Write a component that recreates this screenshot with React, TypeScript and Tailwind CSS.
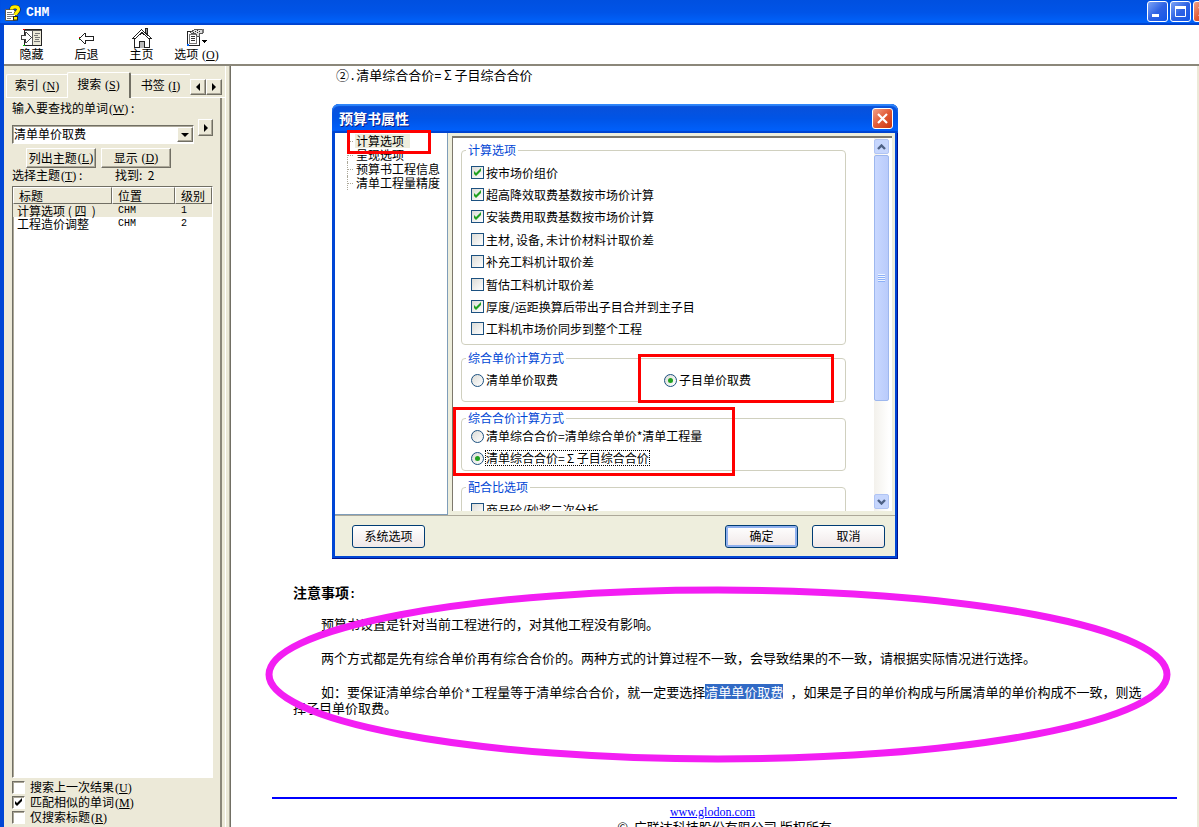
import React from "react";

const SANS = "font-['Noto_Sans_CJK_SC',sans-serif]";

function Key({ k }: { k: string }) {
  return (
    <span className="pl-px font-['Liberation_Serif',serif]">
      (<u className="underline-offset-1">{k}</u>)
    </span>
  );
}

function Half({ children }: { children: string }) {
  return <span className="font-['Liberation_Mono',monospace] text-[12px] leading-none whitespace-pre">{children}</span>;
}

function Sigma() {
  return <span className="inline-block w-[1em] text-center indent-0 leading-none">Σ</span>;
}

function HelpIcon() {
  return (
    <svg width="16" height="16" viewBox="0 0 16 16" aria-hidden="true">
      <path d="M.5 4.500h8l2 2v9H.5z" fill="#fff" stroke="#555" />
      <path d="M2 7.500h5M2 9.500h6M2 11.500h6M2 13.500h4" stroke="#777" />
      <path d="M6.500 4.500C6.500 1 13.500 1 13.500 4.500C13.500 7 10.500 7 10.500 10" fill="none" stroke="#222" strokeWidth="4.400" />
      <path d="M6.500 4.500C6.500 1 13.500 1 13.500 4.500C13.500 7 10.500 7 10.500 10" fill="none" stroke="#ffee00" strokeWidth="3.200" />
      <rect x="8.500" y="11.500" width="4" height="3.500" fill="#ffee00" stroke="#222" />
    </svg>
  );
}

function HideIcon() {
  return (
    <svg width="22" height="20" viewBox="0 0 22 20" shapeRendering="crispEdges" aria-hidden="true">
      <path d="M3.500 1.500h17v16h-17z" fill="#ece9d8" stroke="#222" />
      <path d="M4 3h7v14H4z" fill="#fff" />
      <path d="M11.500 2v15M4 2.500h16" stroke="#555" />
      <path d="M14 5.500h5M13 7.500h4M14 9.500h5M14 11.500h4M13 13.500h6" stroke="#777" />
      <path d="M0.500 7.500h4v-3h1l5 5-5 5h-1v-3h-4z" fill="#fff" stroke="#444" />
      <path d="M2 1h2v1H2z" fill="#e00" />
      <path d="M2 17h2v1H2z" fill="#0c0" />
    </svg>
  );
}

function BackIcon() {
  return (
    <svg width="22" height="20" viewBox="0 0 22 20" shapeRendering="crispEdges" aria-hidden="true">
      <path d="M3.500 10.500l5-5h1v3h8v4h-8v3h-1z" fill="#fff" stroke="#222" />
      <path d="M3 9h1v1H3z" fill="#e00" />
      <path d="M3 11h1v1H3z" fill="#0c0" />
    </svg>
  );
}

function HomeIcon() {
  return (
    <svg width="22" height="20" viewBox="0 0 22 20" shapeRendering="crispEdges" aria-hidden="true">
      <path d="M3.500 10v9.500h15V10L11 3z" fill="#fff" stroke="#222" />
      <path d="M14.500 7V.5h2V9" fill="#999" stroke="#222" />
      <path d="M1.500 10.500l9-9 10 9h-3l-6.500-6L4.500 10.500z" fill="#fff" stroke="#222" />
      <path d="M8.500 19.500v-6h5v6" fill="#bbb" stroke="#222" />
    </svg>
  );
}

function OptionsIcon() {
  return (
    <svg width="22" height="20" viewBox="0 0 22 20" shapeRendering="crispEdges" aria-hidden="true">
      <path d="M1.500 3.500h12v14h-12z" fill="#fff" stroke="#222" />
      <path d="M3.500 6.500h7v9h-7z" fill="#fff" stroke="#777" />
      <path d="M5 8.500h4M5 10.500h4M5 12.500h4" stroke="#333" />
      <path d="M4.500 4.500l4-3h8v4h-3v3h-2l-2-3h-4z" fill="#ddd" stroke="#555" />
      <path d="M7 4.500h1M9 3.500h1M11 4.500h1M13 3.500h1M11 2.500h1" stroke="#333" />
      <path d="M16 1h2v4h-2z" fill="#777" />
      <path d="M16 12h5v1h-5zM17 13h3v1h-3zM18 14h1v1h-1z" fill="#000" />
      <path d="M1 16h2v2H1z" fill="#06f" />
    </svg>
  );
}

function Triangle({ dir }: { dir: "left" | "right" | "down" }) {
  const d = dir === "left" ? "M6 0v8L2 4z" : dir === "right" ? "M2 0v8l4-4z" : "M0 2h8L4 6z";
  return (
    <svg width="8" height="8" viewBox="0 0 8 8" aria-hidden="true">
      <path d={d} fill="#000" />
    </svg>
  );
}

const raised =
  "flex items-center justify-center bg-[#ece9d8] border border-t-white border-l-white border-r-[#716f64] border-b-[#716f64] shadow-[inset_-1px_-1px_0_#aca899]";

function ToolButton({ icon, children }: { icon: React.ReactNode; children: React.ReactNode }) {
  return (
    <button className="flex w-[55px] flex-col items-center whitespace-nowrap pt-[3px] text-[12px] leading-[12px]">
      {icon}
      <span>{children}</span>
    </button>
  );
}

function CaptionButton({ label, close, children }: { label: string; close?: boolean; children: React.ReactNode }) {
  return (
    <button
      aria-label={label}
      className={
        "grid size-[21px] shrink-0 place-items-center rounded-[3px] border border-white " +
        (close
          ? "bg-linear-to-br from-[#f0a088] via-[#e25a35] to-[#c8330c]"
          : "bg-linear-to-br from-[#7da2f5] via-[#2f62e4] to-[#0d55e8]")
      }
    >
      {children}
    </button>
  );
}

function Cross() {
  return (
    <svg width="13" height="13" viewBox="0 0 13 13" aria-hidden="true">
      <path d="M2 2l9 9M11 2l-9 9" stroke="#fff" strokeWidth="2.200" />
    </svg>
  );
}

function ClassicCheck({ label, k, checked }: { label: string; k: string; checked?: boolean }) {
  return (
    <label className="flex h-[15px] items-center gap-[5px]">
      <span className="relative grid size-[13px]">
        <input
          type="checkbox"
          defaultChecked={checked}
          className="peer size-[13px] appearance-none border border-t-[#716f64] border-l-[#716f64] border-r-white border-b-white bg-white shadow-[inset_1px_1px_0_#aca899]"
        />
        <svg className="pointer-events-none absolute inset-0 hidden peer-checked:block" width="13" height="13" viewBox="0 0 13 13" aria-hidden="true">
          <path d="M3 5v3l2 2 5-5V2L5 7z" fill="#000" />
        </svg>
      </span>
      <span>
        {label}
        <Key k={k} />
      </span>
    </label>
  );
}

function XpCheck({ label, checked }: { label: string; checked?: boolean }) {
  return (
    <label className="flex h-[22px] items-center gap-[2px] whitespace-nowrap">
      <span className="relative grid size-[13px]">
        <input
          type="checkbox"
          defaultChecked={checked}
          className="peer size-[13px] appearance-none border border-[#1c5180] bg-linear-to-br from-[#dcdcd7] to-white"
        />
        <svg className="pointer-events-none absolute inset-0 hidden peer-checked:block" width="13" height="13" viewBox="0 0 13 13" aria-hidden="true">
          <path d="M3 5v3l2 2 5-5V2L5 7z" fill="#21a121" />
        </svg>
      </span>
      <span>{label}</span>
    </label>
  );
}

function XpRadio({ name, checked, focus, children }: { name: string; checked?: boolean; focus?: boolean; children: React.ReactNode }) {
  return (
    <label className="flex h-[22px] items-center gap-px whitespace-nowrap">
      <span className="relative grid size-[13px]">
        <input
          type="radio"
          name={name}
          defaultChecked={checked}
          className="peer size-[13px] appearance-none rounded-full border border-[#1c5180] bg-linear-to-br from-[#dcdcd7] to-white"
        />
        <span className="pointer-events-none absolute inset-1 hidden rounded-full bg-[#21a121] peer-checked:block" />
      </span>
      <span className={"border border-dotted leading-[14px] " + (focus ? "border-black" : "border-transparent")}>{children}</span>
    </label>
  );
}

function Group({ title, className, children }: { title: string; className: string; children: React.ReactNode }) {
  return (
    <fieldset className={"rounded-[4px] border border-[#d0d0bf] px-[9px] " + className}>
      <legend className="-ml-[5px] px-[2px] leading-[14px] text-[#0046d5]">{title}</legend>
      {children}
    </fieldset>
  );
}

function DialogButton({ children, primary }: { children: string; primary?: boolean }) {
  return (
    <button
      className={
        "h-[23px] w-[73px] rounded-[3px] border border-[#003c74] bg-linear-to-b from-white to-[#f0e8e8] pb-px leading-[14px] " +
        (primary ? "shadow-[inset_0_0_0_2px_#8fb0ee]" : "")
      }
    >
      {children}
    </button>
  );
}

const CHECKS: [string, boolean][] = [
  ["按市场价组价", true],
  ["超高降效取费基数按市场价计算", true],
  ["安装费用取费基数按市场价计算", true],
  ["主材, 设备, 未计价材料计取价差", false],
  ["补充工料机计取价差", false],
  ["暂估工料机计取价差", false],
  ["厚度/运距换算后带出子目合并到主子目", true],
  ["工料机市场价同步到整个工程", false],
];

const TREE = ["计算选项", "呈现选项", "预算书工程信息", "清单工程量精度"];

function Chevron({ up }: { up?: boolean }) {
  return (
    <svg width="9" height="6" viewBox="0 0 9 6" aria-hidden="true">
      <path d={up ? "M1 5l3.500-3.500L8 5" : "M1 1l3.500 3.500L8 1"} fill="none" stroke="#4d6185" strokeWidth="2.400" />
    </svg>
  );
}

function PropertiesDialog() {
  return (
    <section className="relative mt-[21px] ml-[100px] flex h-[455px] w-[566px] flex-col rounded-t-[7px] bg-[#0046d5] text-[12px] shadow-[inset_-1px_-1px_0_#00138c]">
      <header className="flex h-[29px] shrink-0 items-center justify-between rounded-t-[7px] bg-linear-to-b from-[#0a50d8] via-[#0054e6] to-[#0062ff] pr-[5px] pl-[7px] shadow-[inset_0_2px_1px_#2f86fa,inset_0_-2px_1px_#0043cf]">
        <h2 className="text-[14px] font-bold text-white [text-shadow:1px_1px_0_#0a1883]">预算书属性</h2>
        <CaptionButton label="关闭" close>
          <Cross />
        </CaptionButton>
      </header>
      <div className="mx-[3px] mb-[3px] flex min-h-0 flex-1 flex-col bg-[#eeeedd]">
        <div className="flex h-[383px] shrink-0 border-b border-[#aca899]">
          <ul className="w-[113px] border-r border-b border-[#7f9db9] bg-white pt-px pl-[12px] leading-[14px]">
            {TREE.map((t, i) => (
              <li key={t} className="flex items-center gap-[2px] whitespace-nowrap">
                <span className="h-[14px] w-[6px] shrink-0 border-l border-dotted border-[#aca899] pt-[7px]">
                  <span className="block border-t border-dotted border-[#aca899]" />
                </span>
                <span className={i === 0 ? "bg-[#eeeedd] pr-[6px] pl-px" : "pl-px"}>{t}</span>
              </li>
            ))}
          </ul>
          <div className="mt-[3px] mr-[3px] mb-[4px] ml-[4px] flex min-w-0 flex-1 overflow-hidden border-t-2 border-l border-[#7d786c] bg-white">
            <form className="flex flex-1 flex-col pt-[5px] pr-[28px] pl-[8px]">
              <Group title="计算选项" className="pt-[4px] pb-[4px]">
                <div className="flex h-[179px] flex-col justify-between">
                  {CHECKS.map(([label, on]) => (
                    <XpCheck key={label} label={label} checked={on} />
                  ))}
                </div>
              </Group>
              <Group title="综合单价计算方式" className="mt-[6px] pt-[4px] pb-[10px]">
                <div className="grid grid-cols-[193px_1fr]">
                  <XpRadio name="unit">清单单价取费</XpRadio>
                  <XpRadio name="unit" checked>
                    子目单价取费
                  </XpRadio>
                </div>
              </Group>
              <Group title="综合合价计算方式" className="mt-[9px] pb-px">
                <XpRadio name="total">清单综合合价=清单综合单价*清单工程量</XpRadio>
                <XpRadio name="total" checked focus>
                  清单综合合价=
                  <Sigma />
                  子目综合合价
                </XpRadio>
              </Group>
              <Group title="配合比选项" className="mt-[9px] pt-[4px]">
                <XpCheck label="商品砼/砂浆二次分析" />
              </Group>
            </form>
            <div className="mr-[3px] flex w-[15px] flex-col gap-px bg-linear-to-r from-[#f3f1ec] to-white pt-px pb-[2px]">
              <button aria-label="向上滚动" className="grid h-[15px] place-items-center rounded-[2px] border border-[#b0c4f4] bg-[#c6d6fd]">
                <Chevron up />
              </button>
              <div className="grid h-[246px] place-items-center rounded-[2px] border border-[#9db7ee] bg-linear-to-r from-[#c9d8ff] to-[#b9cbfb]">
                <svg width="7" height="8" viewBox="0 0 7 8" shapeRendering="crispEdges" aria-hidden="true">
                  <path d="M0 .5h7M0 2.500h7M0 4.500h7M0 6.500h7" stroke="#eef4fe" />
                  <path d="M0 1.500h7M0 3.500h7M0 5.500h7M0 7.500h7" stroke="#8cb0f8" />
                </svg>
              </div>
              <button aria-label="向下滚动" className="mt-auto grid h-[15px] place-items-center rounded-[2px] border border-[#b0c4f4] bg-[#c6d6fd]">
                <Chevron />
              </button>
            </div>
          </div>
        </div>
        <div className="flex flex-1 items-center gap-[14px] pr-[10px] pl-[17px]">
          <DialogButton>系统选项</DialogButton>
          <span className="flex-1" />
          <DialogButton primary>确定</DialogButton>
          <DialogButton>取消</DialogButton>
        </div>
      </div>
      <div className="pointer-events-none absolute top-[26px] left-[15px] h-[24px] w-[84px] border-3 border-[#f00]" />
      <div className="pointer-events-none absolute top-[250px] left-[306px] h-[49px] w-[196px] border-3 border-[#f00]" />
      <div className="pointer-events-none absolute top-[303px] left-[121px] h-[69px] w-[282px] border-3 border-[#f00]" />
    </section>
  );
}

function Sidebar() {
  return (
    <aside className="flex w-[227px] shrink-0 border-r border-[#716f64] bg-[#ece9d8] pl-[2px]">
      <div className="flex min-w-0 flex-1 flex-col pt-[6px]">
        <nav className="flex h-[26px] items-end whitespace-nowrap">
          <button className="h-[24px] w-[61px] rounded-tl-[2px] border-t border-b border-l border-white pb-px">
            索引 <Key k="N" />
          </button>
          <button className="h-[26px] w-[64px] rounded-t-[2px] border-t border-r-2 border-l border-t-white border-r-[#716f64] border-l-white pb-[3px]">
            搜索 <Key k="S" />
          </button>
          <button className="h-[24px] w-[59px] border-t border-b border-white pb-px">
            书签 <Key k="I" />
          </button>
          <span className="flex h-[24px] flex-1 border-b border-white pt-[5px]">
            <button aria-label="向左" className={raised + " h-[16px] w-[16px]"}>
              <Triangle dir="left" />
            </button>
            <button aria-label="向右" className={raised + " h-[16px] w-[16px]"}>
              <Triangle dir="right" />
            </button>
          </span>
        </nav>
        <form className="mr-[3px] flex min-h-0 flex-1 flex-col border-r-2 border-[#8b877a] pt-[3px] pr-[7px] pl-[6px] leading-[14px]">
          <label htmlFor="q">
            输入要查找的单词
            <Key k="W" /> :
          </label>
          <div className="mt-[3px] flex items-start gap-[4px]">
            <div className="mt-[6px] flex h-[19px] w-[183px] border border-t-[#716f64] border-r-white border-b-white border-l-[#716f64] bg-white shadow-[inset_1px_1px_0_#aca899]">
              <input id="q" defaultValue="清单单价取费" className="min-w-0 flex-1 bg-transparent pb-px pl-px leading-[14px] outline-none" />
              <button type="button" aria-label="历史" className={raised + " my-px w-[16px]"}>
                <Triangle dir="down" />
              </button>
            </div>
            <button type="button" aria-label="运算符" className={raised + " h-[17px] w-[15px]"}>
              <Triangle dir="right" />
            </button>
          </div>
          <div className="mt-[4px] flex gap-[5px] pl-[14px]">
            <button type="button" className={raised + " h-[20px] w-[70px]"}>
              列出主题
              <Key k="L" />
            </button>
            <button type="button" className={raised + " h-[20px] w-[70px]"}>
              显示&nbsp;
              <Key k="D" />
            </button>
          </div>
          <div className="grid grid-cols-[103px_1fr]">
            <span>
              选择主题
              <Key k="T" /> :
            </span>
            <span>找到: &nbsp;2</span>
          </div>
          <div className="mt-[3px] min-h-0 flex-1 border border-t-[#716f64] border-r-white border-b-white border-l-[#716f64] bg-white shadow-[inset_1px_1px_0_#aca899]">
            <table className="w-full table-fixed border-separate border-spacing-0 text-left">
              <thead>
                <tr className="h-[17px] bg-[#ece9d8]">
                  {[["标题", "w-[99px]"], ["位置", "w-[63px]"], ["级别", "w-auto"]].map(([t, w]) => (
                    <th
                      key={t}
                      className={w + " border-t border-l border-r border-b border-t-white border-l-white border-r-[#716f64] border-b-[#716f64] py-0 pr-0 pl-[5px] font-normal leading-[14px]"}
                    >
                      {t}
                    </th>
                  ))}
                </tr>
              </thead>
              <tbody className="leading-[13px]">
                <tr className="bg-[#ece9d8]">
                  <td className="p-0 pl-[4px] whitespace-nowrap">计算选项 ( 四 &nbsp;)</td>
                  <td className="p-0 pl-[6px] font-['Liberation_Mono',monospace] text-[10px] leading-[13px]">CHM</td>
                  <td className="p-0 pl-[6px] font-['Liberation_Mono',monospace] text-[10px] leading-[13px]">1</td>
                </tr>
                <tr>
                  <td className="p-0 pl-[4px]">工程造价调整</td>
                  <td className="p-0 pl-[6px] font-['Liberation_Mono',monospace] text-[10px] leading-[13px]">CHM</td>
                  <td className="p-0 pl-[6px] font-['Liberation_Mono',monospace] text-[10px] leading-[13px]">2</td>
                </tr>
              </tbody>
            </table>
          </div>
          <div className="pt-[2px] pb-[2px]">
            <ClassicCheck label="搜索上一次结果" k="U" />
            <ClassicCheck label="匹配相似的单词" k="M" checked />
            <ClassicCheck label="仅搜索标题" k="R" />
          </div>
        </form>
      </div>
      <div className="w-[5px] border-r border-l border-r-[#aca899] border-l-white" />
    </aside>
  );
}

export default function App() {
  return (
    <div className={SANS + " flex h-screen flex-col overflow-hidden bg-white text-[12px] text-black"}>
      <header className="flex h-[25px] shrink-0 items-center overflow-hidden bg-linear-to-b from-[#0050e0] via-[#0054e8] to-[#0066ff] pl-[5px] shadow-[inset_0_-2px_1px_#0043cf]">
        <HelpIcon />
        <h1 className="ml-[5px] flex-1 font-['Liberation_Mono',monospace] text-[13px] font-bold text-white">CHM</h1>
        <div className="-mr-[15px] flex gap-[2px] pb-[2px]">
          <CaptionButton label="最小化">
            <svg width="13" height="13" viewBox="0 0 13 13" aria-hidden="true">
              <path d="M1 9h7v3H1z" fill="#fff" />
            </svg>
          </CaptionButton>
          <CaptionButton label="最大化">
            <svg width="13" height="13" viewBox="0 0 13 13" aria-hidden="true">
              <path d="M1.500 2v9.500h10V2" fill="none" stroke="#fff" />
              <path d="M1 1h11v3H1z" fill="#fff" />
            </svg>
          </CaptionButton>
          <CaptionButton label="关闭窗口" close>
            <Cross />
          </CaptionButton>
        </div>
      </header>
      <div className="flex min-h-0 flex-1 flex-col border-l-4 border-[#0046d5]">
        <div className="flex h-[41px] shrink-0 border-b-2 border-[#8b877a] bg-white">
          <ToolButton icon={<HideIcon />}>隐藏</ToolButton>
          <ToolButton icon={<BackIcon />}>后退</ToolButton>
          <ToolButton icon={<HomeIcon />}>主页</ToolButton>
          <ToolButton icon={<OptionsIcon />}>
            选项 <Key k="O" />
          </ToolButton>
        </div>
        <div className="flex min-h-0 flex-1">
          <Sidebar />
          <main className="relative min-w-0 flex-1 overflow-hidden border-r-2 border-[#ece9d8] bg-white pl-px text-[13px] leading-[15px]">
            <p className="pl-[104px] leading-[17px]">
              ②<Half>.</Half>清单综合合价<Half>=</Half>
              <Sigma />
              子目综合合价
            </p>
            <PropertiesDialog />
            <article className="mt-[26px] pr-[50px] pl-[61px]">
              <h3 className="text-[14px] leading-[15px] font-bold">
                注意事项<Half>:</Half>
              </h3>
              <p className="mt-[15px] indent-[28px]">预算书设置是针对当前工程进行的，对其他工程没有影响。</p>
              <p className="mt-[19px] indent-[28px]">
                两个方式都是先有综合单价再有综合合价的。两种方式的计算过程不一致，会导致结果的不一致，请根据实际情况进行选择。
              </p>
              <p className="mt-[19px] indent-[28px]">
                如：要保证清单综合单价<Half>*</Half>工程量等于清单综合合价，就一定要选择
                <mark className="inline-block bg-[#316ac5] align-top indent-0 leading-[15px] text-white">清单单价取费</mark>
                <Half> </Half>，如果是子目的单价构成与所属清单的单价构成不一致，则选择子目单价取费。
              </p>
            </article>
            <footer className="mt-[82px] mr-[20px] ml-[40px] border-t-2 border-[#00f] pt-[7px] text-center whitespace-nowrap">
              <p className="flex justify-center pr-[24px]">
                <a href="#glodon" className="font-['Liberation_Serif',serif] text-[12px] leading-[13px] text-[#00f] underline">
                  www.glodon.com
                </a>
              </p>
              <p>©&nbsp; 广联达科技股份有限公司 版权所有</p>
            </footer>
            <svg className="pointer-events-none absolute top-[520px] left-[34px]" width="906" height="178" viewBox="0 0 906 178" aria-hidden="true">
              <ellipse cx="453" cy="88.500" rx="449" ry="84.500" fill="none" stroke="#f31ef3" strokeWidth="7" />
            </svg>
          </main>
        </div>
      </div>
    </div>
  );
}
